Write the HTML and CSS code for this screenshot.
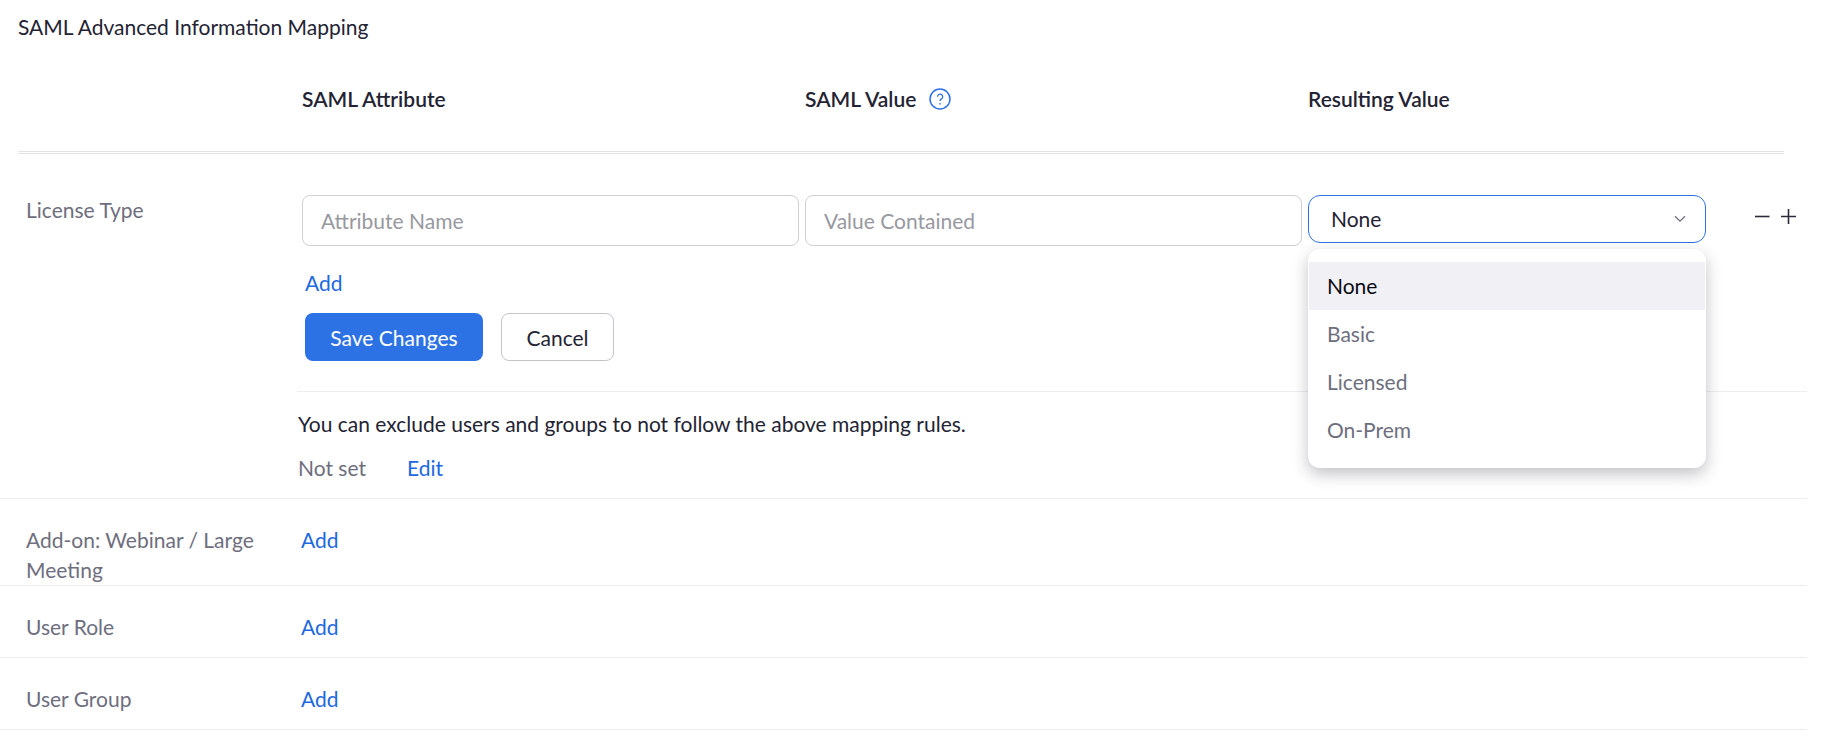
FILE: index.html
```html
<!DOCTYPE html>
<html lang="en">
<head>
<meta charset="utf-8">
<title>SAML Advanced Information Mapping</title>
<link rel="stylesheet" href="styles.css">
</head>
<body>
<main class="page">
  <h1 class="title">SAML Advanced Information Mapping</h1>
  <div class="head">
    <div class="head-col">SAML Attribute</div>
    <div class="head-col head-icon">SAML Value
      <svg class="help" viewBox="0 0 22 22" width="22" height="22" aria-hidden="true"><circle cx="11" cy="11" r="10" fill="none" stroke="#2d72e4" stroke-width="1.5"/><path d="M8.5 8.7a2.6 2.6 0 1 1 4 2.2c-1 .6-1.5 1.1-1.5 2.2" fill="none" stroke="#2d72e4" stroke-width="1.3"/><circle cx="11" cy="15.8" r=".85" fill="#2d72e4"/></svg>
    </div>
    <div class="head-col">Resulting Value</div>
  </div>
  <div class="rule"></div>

  <section class="license">
    <div class="label license-label">License Type</div>
    <div class="license-body">
      <div class="fields">
        <div class="input">Attribute Name</div>
        <div class="input">Value Contained</div>
        <div class="select-wrap">
          <div class="select">None
            <svg class="chev" viewBox="0 0 12 8" width="12" height="8" aria-hidden="true"><path d="M1 1.2l5 5 5-5" fill="none" stroke="#6e6e7e" stroke-width="1.3"/></svg>
          </div>
          <ul class="menu">
            <li class="opt opt-active">None</li>
            <li class="opt">Basic</li>
            <li class="opt">Licensed</li>
            <li class="opt">On-Prem</li>
          </ul>
        </div>
        <div class="steppers">
          <svg viewBox="0 0 15 15" width="15" height="15" aria-hidden="true"><path d="M0 7.5h14.5" stroke="#2b2b3a" stroke-width="1.6"/></svg>
          <svg viewBox="0 0 15 15" width="15" height="15" aria-hidden="true"><path d="M0 7.5h15M7.5 0v15" stroke="#2b2b3a" stroke-width="1.6"/></svg>
        </div>
      </div>
      <a class="link add-first">Add</a>
      <div class="actions">
        <button class="btn btn-primary">Save Changes</button>
        <button class="btn btn-plain">Cancel</button>
      </div>
      <div class="subline"></div>
      <p class="note">You can exclude users and groups to not follow the above mapping rules.</p>
      <div class="status"><span class="muted">Not set</span><a class="link">Edit</a></div>
    </div>
  </section>

  <section class="row row-addon">
    <div class="label">Add-on: Webinar / Large Meeting</div>
    <a class="link">Add</a>
  </section>
  <section class="row row-plain">
    <div class="label">User Role</div>
    <a class="link">Add</a>
  </section>
  <section class="row row-plain">
    <div class="label">User Group</div>
    <a class="link">Add</a>
  </section>
</main>
</body>
</html>
```

FILE: styles.css
```css
* { box-sizing: border-box; }
html, body { margin: 0; padding: 0; background: #fff; }
body {
  font-family: Lato, "Liberation Sans", sans-serif;
  font-size: 21px;
  color: #232333;
  height: 742px;
  overflow: hidden;
}
.page { width: 1807px; }
.title {
  margin: 0;
  padding: 15px 0 0 18px;
  font-size: 21px;
  font-weight: 400;
  line-height: 24px;
  height: 40px;
}
.head {
  display: grid;
  grid-template-columns: 503px 503px 475px;
  margin-left: 302px;
  padding-top: 47px;
  height: 111px;
  line-height: 24px;
}
.head-col { font-weight: 600; color: #232333; }
.head-icon { display: flex; align-items: center; height: 24px; gap: 13px; }
.help { flex: none; }
.rule {
  margin-left: 18px;
  width: 1766px;
  height: 3px;
  border-top: 1px solid #e4e4e8;
  border-bottom: 1px solid #e4e4e8;
}
.license {
  display: flex;
  border-bottom: 1px solid #ededf0;
  height: 345px;
}
.label {
  color: #6e6e7e;
  line-height: 30px;
  width: 302px;
  padding: 0 20px 0 26px;
  flex: none;
}
.license-label { margin-top: 41px; }
.license-body { flex: 1; margin-left: -5px; min-width: 0; }
.fields { display: flex; margin-top: 41px; margin-left: 5px; }
.input {
  width: 497px;
  height: 51px;
  margin-right: 6px;
  border: 1px solid #cfcfd4;
  border-radius: 8px;
  color: #98989f;
  line-height: 49px;
  padding-left: 18px;
  flex: none;
}
.select-wrap { position: relative; width: 398px; flex: none; }
.select {
  height: 48px;
  border: 1px solid #2d72e4;
  border-radius: 12px;
  line-height: 45px;
  padding-left: 22px;
  color: #232333;
  position: relative;
}
.chev { position: absolute; right: 19px; top: 19px; }
.menu {
  list-style: none;
  position: absolute;
  z-index: 2;
  top: 54px;
  left: 0;
  width: 398px;
  height: 219px;
  margin: 0;
  padding: 13px 1px 0;
  background: #fff;
  border-radius: 12px;
  box-shadow: 0 6px 16px rgba(35, 35, 51, .28);
}
.opt {
  height: 48px;
  line-height: 48px;
  padding-left: 18px;
  color: #6e6e7e;
}
.opt-active { background: #f1f1f5; color: #0b0b14; }
.steppers {
  display: flex;
  gap: 11px;
  margin-left: 49px;
  padding-top: 14px;
  align-items: flex-start;
}
.link { color: #2068e0; line-height: 24px; }
.add-first { display: block; margin: 25px 0 0 8px; height: 24px; }
.actions { display: flex; gap: 18px; margin: 18px 0 0 8px; }
.btn {
  font: inherit;
  height: 48px;
  border-radius: 8px;
  padding: 0;
}
.btn-primary { width: 178px; background: #2d72e4; border: 0; color: #fff; }
.btn-plain { width: 113px; background: #fff; border: 1px solid #c4c4cc; color: #232333; }
.subline { height: 1px; background: #ededf0; margin-top: 30px; }
.note { margin: 20px 0 0 1px; line-height: 24px; color: #232333; }
.status { display: flex; gap: 41px; margin: 20px 0 0 1px; line-height: 24px; }
.muted { color: #6e6e7e; }
.row {
  display: flex;
  border-bottom: 1px solid #ededf0;
  align-items: flex-start;
}
.row-addon { height: 87px; padding-top: 26px; }
.row-plain { height: 72px; padding-top: 26px; }
.row .link { line-height: 30px; margin-left: -1px; }
```
